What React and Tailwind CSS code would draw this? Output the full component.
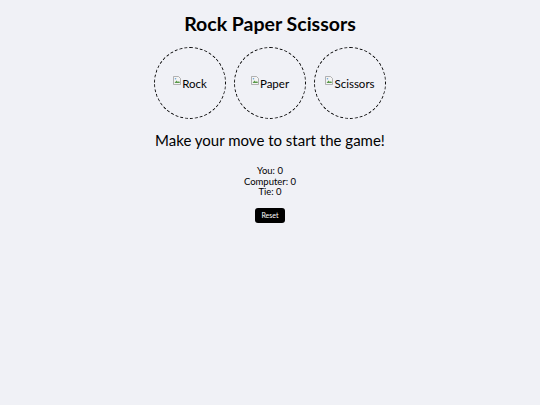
function BrokenImage({ alt }) {
  return (
    <span className="inline-flex items-start text-[11.5px] leading-none text-black">
      <svg width="8" height="9" viewBox="0 0 8 9" className="mr-[1px] -mt-[1px]">
        <path d="M0.5 0.5h5l2 2v6h-7z" fill="#f4f4f4" stroke="#a0a0a0" strokeWidth="0.8" />
        <path d="M1.5 7l2-2.5 1.5 1.5 1-1 1 2z" fill="#5a9a4a" />
        <circle cx="2.5" cy="2.8" r="0.8" fill="#6aa4d8" />
      </svg>
      <span className="mt-[1px]">{alt}</span>
    </span>
  );
}

const moves = ["Rock", "Paper", "Scissors"];

export default function App() {
  return (
    <div
      className="min-h-[405px] w-full bg-[#f0f1f6] text-black"
      style={{ fontFamily: "Lato, 'Noto Sans', sans-serif" }}
    >
      <div className="flex flex-col items-center pt-[12px]">
        <h1 className="text-[19.5px] font-bold leading-[24px]">Rock Paper Scissors</h1>
        <div className="mt-[11px] flex gap-[8px]">
          {moves.map((m) => (
            <button
              key={m}
              type="button"
              className="flex h-[72px] w-[72px] items-center justify-center rounded-full border border-dashed border-black"
            >
              <BrokenImage alt={m} />
            </button>
          ))}
        </div>
        <p className="mt-[11px] text-[15px] leading-[20px]">Make your move to start the game!</p>
        <div className="mt-[16px] flex flex-col items-center text-[9.5px] leading-[10.5px]">
          <span>You: 0</span>
          <span>Computer: 0</span>
          <span>Tie: 0</span>
        </div>
        <button
          type="button"
          className="mt-[10px] h-[15px] w-[30px] rounded-[3px] bg-black text-[7px] leading-none text-white"
        >
          Reset
        </button>
      </div>
    </div>
  );
}
